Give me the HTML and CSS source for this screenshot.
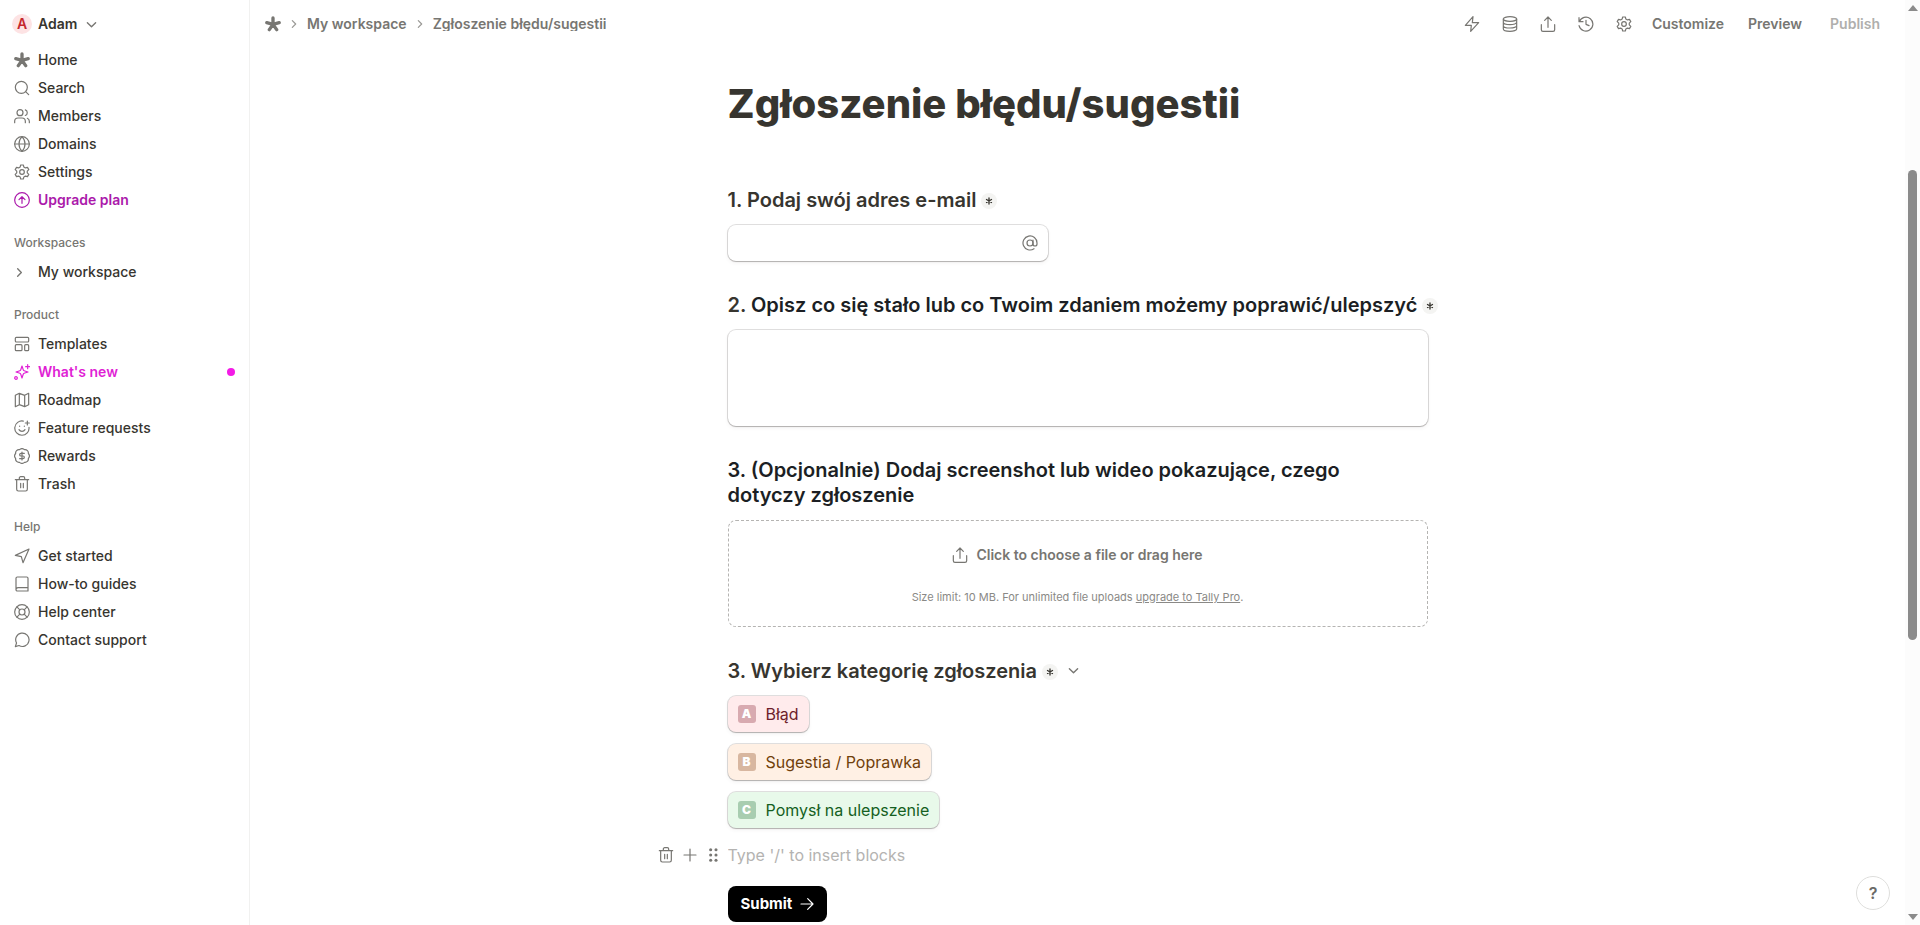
FILE: index.html
```
<!DOCTYPE html>
<html lang="pl">
<head>
    <meta charset="UTF-8">
    <title>Zgłoszenie błędu/sugestii</title>
    <link rel="stylesheet" href="styles.css">
</head>
<body>
<!-- icons -->
<svg class="sprite">
    <symbol id="star" viewBox="0 0 24 24"><path d="M12 12.500V3M12 12.500l-9.300-2.500M12 12.500l9.300-2.500M12 12.500l-5.500 8M12 12.500l5.500 8" stroke-width="5"/></symbol>
    <symbol id="search" viewBox="0 0 24 24"><circle cx="11" cy="11" r="9"/><path d="M22 22l-4.6-4.6"/></symbol>
    <symbol id="members" viewBox="0 0 24 24"><circle cx="9" cy="7" r="4.5"/><path d="M1 22v-2a5 5 0 0 1 5-5h6a5 5 0 0 1 5 5v2M17 2.8a4.5 4.5 0 0 1 0 8.4M23 22v-2a5 5 0 0 0-3-4.6"/></symbol>
    <symbol id="globe" viewBox="0 0 24 24"><circle cx="12" cy="12" r="11"/><path d="M1 12h22M12 1c6 6 6 16 0 22M12 1c-6 6-6 16 0 22"/></symbol>
    <symbol id="gear" viewBox="0 0 24 24"><circle cx="12" cy="12" r="3.5"/><path d="M10 1.5h4l.8 3.1 2.3 1.3 3.1-.9 2 3.5-2.3 2.2v2.6l2.3 2.2-2 3.5-3.1-.9-2.3 1.3-.8 3.1h-4l-.8-3.1-2.3-1.3-3.1.9-2-3.5 2.3-2.2v-2.6L1.800 8.500l2-3.500 3.100.9 2.300-1.300z"/></symbol>
    <symbol id="upgrade" viewBox="0 0 24 24"><circle cx="12" cy="12" r="11"/><path d="M12 17V7.500M7.500 11.500L12 7l4.500 4.500"/></symbol>
    <symbol id="right" viewBox="0 0 24 24"><path d="M8 4l8 8-8 8"/></symbol>
    <symbol id="down" viewBox="0 0 24 24"><path d="M3 8l9 9 9-9"/></symbol>
    <symbol id="templates" viewBox="0 0 24 24"><rect x="2" y="2" width="20" height="7" rx="1.500"/><rect x="2" y="13" width="10" height="9" rx="1.500"/><rect x="16" y="13" width="6" height="9" rx="1.500"/></symbol>
    <symbol id="sparkles" viewBox="0 0 24 24"><path d="M12 3l1.900 5.800a2 2 0 0 0 1.300 1.300L21 12l-5.800 1.900a2 2 0 0 0-1.300 1.300L12 21l-1.900-5.800a2 2 0 0 0-1.300-1.300L3 12l5.800-1.900a2 2 0 0 0 1.300-1.300zM20.500 1v6M23.500 4h-6"/><circle cx="3" cy="21" r="2"/></symbol>
    <symbol id="map" viewBox="0 0 24 24"><path d="M2 5l6-3 8 3 6-3v17l-6 3-8-3-6 3zM8 2v17M16 5v17"/></symbol>
    <symbol id="smile" viewBox="0 0 24 24"><path d="M22.500 11a10.700 10.700 0 1 1-8.500-9.300M7.500 14.500s1.500 2.500 4.500 2.500 4.500-2.500 4.500-2.500M8.500 9v.5M15.500 9v.5M17 4.500h6M20 1.500v6"/></symbol>
    <symbol id="reward" viewBox="0 0 24 24"><path d="M8.300 2.500a5 5 0 0 1 7.400 0 5 5 0 0 1 5.800 5.800 5 5 0 0 1 0 7.400 5 5 0 0 1-5.800 5.800 5 5 0 0 1-7.400 0 5 5 0 0 1-5.800-5.800 5 5 0 0 1 0-7.400 5 5 0 0 1 5.800-5.800z"/><path d="M15.500 8h-5a2 2 0 0 0 0 4h3a2 2 0 0 1 0 4h-5M12 18V6"/></symbol>
    <symbol id="trash" viewBox="0 0 24 24"><path d="M2 5.500h20M4 5.500V20a2.500 2.500 0 0 0 2.500 2.500h11A2.500 2.500 0 0 0 20 20V5.500M8 5.500V3a2 2 0 0 1 2-2h4a2 2 0 0 1 2 2v2.500M10 11v6.500M14 11v6.500"/></symbol>
    <symbol id="send" viewBox="0 0 24 24"><path d="M2 11L22.500 1.500 13.500 22l-2.500-9z"/></symbol>
    <symbol id="book" viewBox="0 0 24 24"><path d="M3 20.500V3.500a2 2 0 0 1 2-2h14a2 2 0 0 1 2 2v19H5a2 2 0 0 1-2-2 3 3 0 0 1 3-3h15"/></symbol>
    <symbol id="buoy" viewBox="0 0 24 24"><circle cx="12" cy="12" r="11"/><circle cx="12" cy="12" r="4.500"/><path d="M4.300 4.300l4.500 4.500M15.200 15.200l4.500 4.500M15.200 8.800l4.500-4.500M4.300 19.700l4.500-4.500"/></symbol>
    <symbol id="chat" viewBox="0 0 24 24"><path d="M2 22l1.800-5.500A10 10 0 1 1 7.500 20.300z"/></symbol>
    <symbol id="bolt" viewBox="0 0 24 24"><path d="M13.500 1L2 14h9l-1 9L22 10h-9.500z"/></symbol>
    <symbol id="database" viewBox="0 0 24 24"><ellipse cx="12" cy="4.500" rx="10" ry="3.500"/><path d="M2 4.500v15c0 2 4.500 3.500 10 3.500s10-1.500 10-3.500v-15M2 9.500c0 2 4.500 3.500 10 3.500s10-1.500 10-3.500M2 14.500c0 2 4.500 3.500 10 3.500s10-1.500 10-3.500"/></symbol>
    <symbol id="upload" viewBox="0 0 24 24"><path d="M2 13v7.500A2.500 2.500 0 0 0 4.500 23h15a2.500 2.500 0 0 0 2.500-2.500V13M12 17V1.500M7 6.500l5-5 5 5"/></symbol>
    <symbol id="history" viewBox="0 0 24 24"><path d="M1.500 2.500v6h6M2 8.500a10.500 10.500 0 1 1-.4 6M12 6.500v6l4.500 2"/></symbol>
    <symbol id="at" viewBox="0 0 24 24"><circle cx="12" cy="12" r="4.500"/><path d="M16.500 7.500v6a3 3 0 0 0 6 0V12a10.500 10.500 0 1 0-4.500 8.600"/></symbol>
    <symbol id="asterisk" viewBox="0 0 24 24"><path d="M12 3v18M4.500 7.500l15 9M4.500 16.500l15-9" stroke-width="4"/></symbol>
    <symbol id="plus" viewBox="0 0 24 24"><path d="M12 3v18M3 12h18"/></symbol>
    <symbol id="grip" viewBox="0 0 24 24"><g fill="currentColor" stroke="none"><circle cx="7" cy="4" r="2.300"/><circle cx="15" cy="4" r="2.300"/><circle cx="7" cy="12" r="2.300"/><circle cx="15" cy="12" r="2.300"/><circle cx="7" cy="20" r="2.300"/><circle cx="15" cy="20" r="2.300"/></g></symbol>
    <symbol id="arrow" viewBox="0 0 24 24"><path d="M3 12h18M13 4l8 8-8 8"/></symbol>
</svg>

<div class="app">
    <nav class="sidebar">
        <button class="account"><span class="avatar">A</span>Adam<svg class="icon small"><use href="#down"/></svg></button>
        <ul>
            <li><a href="#"><svg class="icon"><use href="#star"/></svg>Home</a></li>
            <li><a href="#"><svg class="icon"><use href="#search"/></svg>Search</a></li>
            <li><a href="#"><svg class="icon"><use href="#members"/></svg>Members</a></li>
            <li><a href="#"><svg class="icon"><use href="#globe"/></svg>Domains</a></li>
            <li><a href="#"><svg class="icon"><use href="#gear"/></svg>Settings</a></li>
            <li><a href="#" class="upgrade"><svg class="icon"><use href="#upgrade"/></svg>Upgrade plan</a></li>
        </ul>
        <h2>Workspaces</h2>
        <ul>
            <li><a href="#"><span class="slot"><svg class="icon small"><use href="#right"/></svg></span>My workspace</a></li>
        </ul>
        <h2>Product</h2>
        <ul>
            <li><a href="#"><svg class="icon"><use href="#templates"/></svg>Templates</a></li>
            <li><a href="#" class="news"><svg class="icon"><use href="#sparkles"/></svg>What's new<i class="dot"></i></a></li>
            <li><a href="#"><svg class="icon"><use href="#map"/></svg>Roadmap</a></li>
            <li><a href="#"><svg class="icon"><use href="#smile"/></svg>Feature requests</a></li>
            <li><a href="#"><svg class="icon"><use href="#reward"/></svg>Rewards</a></li>
            <li><a href="#"><svg class="icon"><use href="#trash"/></svg>Trash</a></li>
        </ul>
        <h2>Help</h2>
        <ul>
            <li><a href="#"><svg class="icon"><use href="#send"/></svg>Get started</a></li>
            <li><a href="#"><svg class="icon"><use href="#book"/></svg>How-to guides</a></li>
            <li><a href="#"><svg class="icon"><use href="#buoy"/></svg>Help center</a></li>
            <li><a href="#"><svg class="icon"><use href="#chat"/></svg>Contact support</a></li>
        </ul>
    </nav>

    <main class="main">
        <header class="topbar">
            <div class="crumbs">
                <a href="#"><svg class="icon"><use href="#star"/></svg></a>
                <svg class="icon tiny"><use href="#right"/></svg>
                <a href="#">My workspace</a>
                <svg class="icon tiny"><use href="#right"/></svg>
                <a href="#" class="current">Zgłoszenie błędu/sugestii</a>
            </div>
            <div class="actions">
                <button class="tool" aria-label="Integrations"><svg class="icon"><use href="#bolt"/></svg></button>
                <button class="tool" aria-label="Submissions"><svg class="icon"><use href="#database"/></svg></button>
                <button class="tool" aria-label="Share"><svg class="icon"><use href="#upload"/></svg></button>
                <button class="tool" aria-label="History"><svg class="icon"><use href="#history"/></svg></button>
                <button class="tool" aria-label="Settings"><svg class="icon"><use href="#gear"/></svg></button>
                <button class="action">Customize</button>
                <button class="action">Preview</button>
                <button class="action publish" disabled>Publish</button>
            </div>
        </header>

        <form class="form">
            <h1>Zgłoszenie błędu/sugestii</h1>

            <div class="question">
                <label class="title" for="email">1. Podaj swój adres e-mail<span class="required"><svg class="icon"><use href="#asterisk"/></svg></span></label>
                <div class="email">
                    <input type="email" id="email">
                    <svg class="icon"><use href="#at"/></svg>
                </div>
            </div>

            <div class="question">
                <label class="title nowrap" for="desc">2. <b>Opisz co się stało lub co Twoim zdaniem możemy poprawić/ulepszyć</b><span class="required"><svg class="icon"><use href="#asterisk"/></svg></span></label>
                <textarea id="desc"></textarea>
            </div>

            <div class="question">
                <label class="title" for="file"><b>3. (Opcjonalnie) Dodaj screenshot lub wideo pokazujące, czego dotyczy zgłoszenie</b></label>
                <div class="upload">
                    <label class="choose"><svg class="icon"><use href="#upload"/></svg>Click to choose a file or drag here<input type="file" id="file" class="hidden"></label>
                    <p>Size limit: 10 MB. For unlimited file uploads <a href="#">upgrade to Tally Pro</a>.</p>
                </div>
            </div>

            <fieldset class="question">
                <legend class="title">3. Wybierz kategorię zgłoszenia<span class="required"><svg class="icon"><use href="#asterisk"/></svg></span><svg class="icon small more"><use href="#down"/></svg></legend>
                <div class="options">
                    <label class="option red"><input type="radio" name="kategoria" class="hidden"><span class="key">A</span>Błąd</label>
                    <label class="option orange"><input type="radio" name="kategoria" class="hidden"><span class="key">B</span>Sugestia / Poprawka</label>
                    <label class="option green"><input type="radio" name="kategoria" class="hidden"><span class="key">C</span>Pomysł na ulepszenie</label>
                </div>
            </fieldset>

            <div class="insert">
                <button type="button" aria-label="Delete"><svg class="icon"><use href="#trash"/></svg></button>
                <button type="button" aria-label="Add"><svg class="icon"><use href="#plus"/></svg></button>
                <button type="button" aria-label="Move"><svg class="icon"><use href="#grip"/></svg></button>
                <input type="text" aria-label="Block" placeholder="Type '/' to insert blocks">
            </div>

            <button type="submit" class="submit">Submit<svg class="icon"><use href="#arrow"/></svg></button>
        </form>
    </main>

    <div class="scrollbar">
        <i class="up"></i>
        <div class="track"><i class="thumb"></i></div>
        <i class="bottom"></i>
    </div>
</div>

<button class="help">?</button>
</body>
</html>
```
FILE: styles.css
```
* {
    box-sizing: border-box;
    padding: 0;
    margin: 0;
}

body {
    font-family: Inter, "Liberation Sans", sans-serif;
    font-size: 14px;
    font-weight: 500;
    line-height: 20px;
    color: #37352f;
    background: #fff;
}

ul {
    list-style: none;
}

a {
    color: inherit;
    text-decoration: none;
}

button, input, textarea {
    font: inherit;
    color: inherit;
    border: 0;
    background: none;
    outline: none;
}

button {
    cursor: pointer;
}

.sprite {
    display: none;
}

.icon {
    width: 16px;
    height: 16px;
    flex: none;
    fill: none;
    stroke: currentColor;
    stroke-width: 1.8;
    stroke-linecap: round;
    stroke-linejoin: round;
    overflow: visible;
}

.icon.small {
    width: 11px;
    height: 11px;
    stroke-width: 3;
}

.icon.tiny {
    width: 10px;
    height: 10px;
    stroke-width: 3;
    color: #9b9a97;
}

.hidden {
    position: absolute;
    opacity: 0;
    width: 1px;
    height: 1px;
}

.app {
    display: flex;
    height: 100vh;
    overflow: hidden;
}

/* sidebar */
.sidebar {
    flex: none;
    width: 250px;
    padding: 10px 14px;
    border-right: 1px solid #f1f1f0;
}

.sidebar a, .account {
    display: flex;
    align-items: center;
    gap: 8px;
    height: 28px;
}

.sidebar .icon {
    color: #777672;
}

.account {
    font-weight: 600;
    margin-bottom: 8px;
}

.account .icon {
    margin-left: 1px;
}

.avatar {
    width: 20px;
    height: 20px;
    margin: 0 -2px;
    border-radius: 50%;
    background: #fde3e4;
    color: #c4282d;
    text-align: center;
}

.sidebar h2 {
    margin: 20px 0 6px;
    font-size: 12px;
    font-weight: 500;
    line-height: 18px;
    color: #777672;
}

.slot {
    display: flex;
    width: 16px;
}

.sidebar .upgrade, .sidebar .upgrade .icon {
    color: #ab1aab;
    font-weight: 600;
}

.sidebar .news, .sidebar .news .icon {
    color: #e01fd5;
    font-weight: 600;
}

.dot {
    width: 8px;
    height: 8px;
    margin-left: auto;
    border-radius: 50%;
    background: #f31be6;
}

/* top bar */
.main {
    flex: 1;
}

.topbar {
    display: flex;
    justify-content: space-between;
    align-items: center;
    height: 48px;
    padding: 0 25px 0 15px;
    color: #777672;
    font-weight: 600;
}

.crumbs, .actions {
    display: flex;
    align-items: center;
}

.crumbs {
    gap: 8px;
}

.crumbs a {
    display: flex;
}

.crumbs .current {
    height: 14px;
    line-height: 14px;
    overflow: hidden;
}

.tool {
    display: flex;
    justify-content: center;
    width: 38px;
}

.action {
    margin-left: 24px;
}

.tool + .action {
    margin-left: 9px;
}

.publish {
    margin-left: 28px;
    color: #b0afad;
}

/* form */
.form {
    max-width: 700px;
    margin: 0 auto;
    padding-top: 32px;
}

h1 {
    margin-bottom: 60px;
    font-size: 40px;
    font-weight: 800;
    line-height: 48px;
}

.question {
    margin-bottom: 32px;
    border: 0;
}

.title {
    display: block;
    margin-bottom: 12px;
    padding-right: 24px;
    font-size: 20px;
    font-weight: 600;
    line-height: 25px;
}

.title b {
    font-weight: 600;
    color: #1c1f24;
}

.nowrap {
    white-space: nowrap;
}

.required {
    display: inline-flex;
    justify-content: center;
    align-items: center;
    width: 16px;
    height: 16px;
    margin-left: 5px;
    border-radius: 50%;
    background: #f4f4f2;
    vertical-align: 2px;
}

.required .icon {
    width: 8px;
    height: 8px;
}

.more {
    margin-left: 10px;
    color: #777672;
    vertical-align: 2px;
}

.email, textarea, .option {
    border-radius: 8px;
    box-shadow: 0 0 0 1px rgba(61, 59, 53, .16), 0 1px 1px rgba(61, 59, 53, .24), 0 2px 4px rgba(61, 59, 53, .06);
}

.email {
    display: flex;
    align-items: center;
    width: 320px;
    height: 36px;
    padding: 0 10px;
    color: #777672;
}

.email input {
    flex: 1;
}

textarea {
    display: block;
    width: 100%;
    height: 96px;
    padding: 8px 10px;
    resize: none;
}

.upload {
    height: 107px;
    padding-top: 24px;
    border: 1px dashed #b5b4b2;
    border-radius: 8px;
    text-align: center;
    color: #777672;
}

.choose {
    display: flex;
    justify-content: center;
    align-items: center;
    gap: 8px;
    font-weight: 600;
}

.upload p {
    margin-top: 23px;
    font-size: 11px;
    font-weight: 400;
    line-height: 18px;
    color: #8a8986;
}

.upload a {
    text-decoration: underline;
}

.options {
    display: flex;
    flex-direction: column;
    align-items: flex-start;
    gap: 12px;
}

.option {
    display: flex;
    align-items: center;
    gap: 10px;
    height: 36px;
    padding: 0 10px;
    font-size: 16px;
    font-weight: 400;
}

.key {
    width: 18px;
    height: 18px;
    border-radius: 3px;
    font-size: 12px;
    font-weight: 900;
    line-height: 18px;
    text-align: center;
    color: #fff;
}

.red {
    background: #ffebec;
    color: #6e1e2b;
}

.red .key {
    background: #d8aab0;
}

.orange {
    background: #fff0e4;
    color: #70400b;
}

.orange .key {
    background: #d8b7a0;
}

.green {
    background: #e8f9ea;
    color: #145f22;
}

.green .key {
    background: #a8cdb0;
}

.question + .insert {
    margin-top: -17px;
}

.insert {
    display: flex;
    align-items: center;
    gap: 8px;
    height: 24px;
    margin-left: -70px;
    margin-bottom: 19px;
    color: #777672;
}

.insert button {
    display: flex;
}

.insert input {
    flex: 1;
    margin-left: -2px;
    font-size: 16px;
    font-weight: 400;
}

.insert input::placeholder {
    color: #b4b3b1;
}

.submit {
    display: flex;
    align-items: center;
    gap: 7px;
    height: 36px;
    padding: 0 12px 0 13px;
    border-radius: 8px;
    background: #000;
    color: #fff;
    font-size: 15px;
    font-weight: 700;
}

.help {
    position: fixed;
    right: 30px;
    bottom: 15px;
    width: 34px;
    height: 34px;
    border: 1px solid #dededc;
    border-radius: 50%;
    background: #fff;
    color: #6b6a67;
    font-size: 16px;
    font-weight: 600;
}

/* scrollbar */
.scrollbar {
    display: flex;
    flex-direction: column;
    align-items: center;
    width: 15px;
    padding: 5px 0;
    background: #fcfcfc;
}

.up, .bottom {
    border: 5px solid transparent;
}

.up {
    border-top: 0;
    border-bottom: 6px solid #8b8b8b;
}

.bottom {
    border-bottom: 0;
    border-top: 6px solid #8b8b8b;
}

.track {
    flex: 1;
    width: 9px;
}

.thumb {
    display: block;
    height: 52%;
    margin-top: 159px;
    border-radius: 5px;
    background: #8b8b8b;
}
```
